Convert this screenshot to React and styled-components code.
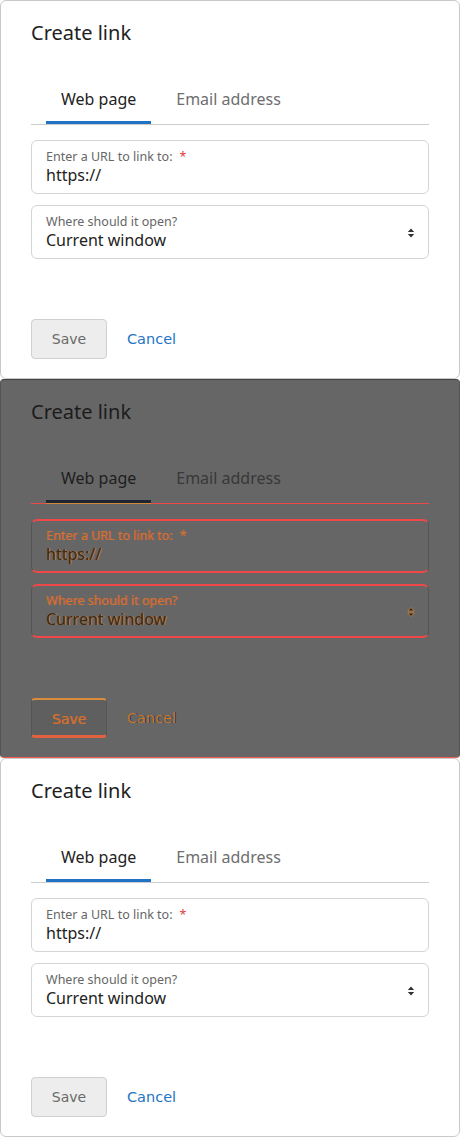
import React from "react";
import styled, { createGlobalStyle, css } from "styled-components";

const GlobalStyle = createGlobalStyle`
  html, body {
    margin: 0;
    padding: 0;
    background: #ffffff;
  }
  body {
    font-family: "Noto Sans", "Open Sans", sans-serif;
  }
`;

const Dialog = ({ contrast }) => {
  return (
    <Panel $contrast={contrast}>
      <Title $contrast={contrast}>Create link</Title>
      <TabList $contrast={contrast}>
        <Tab $active $contrast={contrast}>Web page</Tab>
        <Tab $contrast={contrast}>Email address</Tab>
      </TabList>
      <Field $contrast={contrast}>
        <Label $contrast={contrast}>
          Enter a URL to link to:<Required $contrast={contrast}>*</Required>
        </Label>
        <Value $contrast={contrast}>https://</Value>
      </Field>
      <SelectField $contrast={contrast}>
        <div>
          <Label $contrast={contrast}>Where should it open?</Label>
          <Value $contrast={contrast}>Current window</Value>
        </div>
        <Arrows viewBox="0 0 8 12" $contrast={contrast}>
          <path d="M4 1.5 L7.2 5 L0.8 5 Z" />
          <path d="M4 10.5 L7.2 7 L0.8 7 Z" />
        </Arrows>
      </SelectField>
      <Actions>
        <SaveButton $contrast={contrast}>Save</SaveButton>
        <CancelLink $contrast={contrast}>Cancel</CancelLink>
      </Actions>
    </Panel>
  );
};

const App = () => {
  return (
    <Page>
      <GlobalStyle />
      <Dialog />
      <Dialog contrast />
      <Dialog />
    </Page>
  );
};

export default App;

const Page = styled.div`
  display: flex;
  flex-direction: column;
  width: 460px;
`;

const Panel = styled.section`
  box-sizing: border-box;
  height: 379px;
  display: flex;
  flex-direction: column;
  padding: 17px 30px 0 30px;
  background: #ffffff;
  border: 1px solid #c9c9c9;
  border-radius: 6px;

  ${(p) =>
    p.$contrast &&
    css`
      background: #666666;
      border-color: #555555;
      border-top-color: #444444;
      border-bottom: 1px solid #f05a50;
      border-radius: 4px;
    `}
`;

const Title = styled.h2`
  margin: 0;
  font-size: 20px;
  line-height: 30px;
  font-weight: 400;
  color: ${(p) => (p.$contrast ? "#1c1c1c" : "#222222")};
`;

const TabList = styled.div`
  display: flex;
  gap: 10px;
  margin-top: 29px;
  padding-left: 15px;
  border-bottom: 1px solid ${(p) => (p.$contrast ? "#f04848" : "#cccccc")};
`;

const Tab = styled.div`
  padding: 10px 15px 10px 15px;
  font-size: 16px;
  line-height: 24px;
  color: ${(p) =>
    p.$active ? (p.$contrast ? "#1e1e1e" : "#222222") : p.$contrast ? "#383838" : "#6e6e6e"};
  border-bottom: 3px solid
    ${(p) => (p.$active ? (p.$contrast ? "#1d2733" : "#1f72c4") : "transparent")};

  ${(p) =>
    p.$active &&
    p.$contrast &&
    css`
      border-bottom: 3px solid #1d2733;
      box-shadow: 0 1px 0 #d48a3c;
    `}
`;

const fieldBox = css`
  box-sizing: border-box;
  height: 54px;
  padding: 8px 14px 7px 14px;
  border: 1px solid #d4d4d4;
  border-radius: 6px;
  background: transparent;

  ${(p) =>
    p.$contrast &&
    css`
      border-color: #555555;
      border-top: 2px solid #f04848;
      border-bottom: 2px solid #f04848;
      padding: 7px 14px 6px 14px;
    `}
`;

const Field = styled.div`
  ${fieldBox}
  margin-top: 15px;
`;

const SelectField = styled.div`
  ${fieldBox}
  margin-top: 11px;
  display: flex;
  align-items: center;
  justify-content: space-between;
  padding-right: 13px;
`;

const Label = styled.div`
  font-size: 12.5px;
  line-height: 16px;
  color: ${(p) => (p.$contrast ? "#c67a34" : "#666666")};
  ${(p) =>
    p.$contrast &&
    css`
      text-shadow: 0.5px 0 0 #e04a3a;
    `}
`;

const Required = styled.span`
  margin-left: 7px;
  color: ${(p) => (p.$contrast ? "#c67a34" : "#e03c3c")};
`;

const Value = styled.div`
  margin-top: -1px;
  font-size: 16px;
  line-height: 22px;
  color: ${(p) => (p.$contrast ? "#3a2c1e" : "#222222")};
  ${(p) =>
    p.$contrast &&
    css`
      text-shadow: 1px 0 0 #c8782f;
    `}
`;

const Arrows = styled.svg`
  width: 8px;
  height: 12px;
  fill: ${(p) => (p.$contrast ? "#2a2418" : "#333333")};
  ${(p) =>
    p.$contrast &&
    css`
      stroke: #d08a3c;
      stroke-width: 0.8;
    `}
`;

const Actions = styled.div`
  display: flex;
  align-items: center;
  gap: 20px;
  margin-top: 60px;
`;

const SaveButton = styled.button`
  box-sizing: border-box;
  width: 76px;
  height: 40px;
  padding: 0;
  border: 1px solid #d0d0d0;
  border-radius: 4px;
  background: #ededed;
  font-family: "DejaVu Sans", sans-serif;
  font-size: 14px;
  line-height: 38px;
  color: #6a6a6a;
  cursor: default;

  ${(p) =>
    p.$contrast &&
    css`
      background: #5f5f5f;
      border-color: #555555;
      border-top: 2px solid #d88c3c;
      border-bottom: 3px solid #e2613e;
      color: #c8792f;
      text-shadow: 0.5px 0 0 #e04a3a;
    `}
`;

const CancelLink = styled.a`
  font-family: "DejaVu Sans", sans-serif;
  font-size: 14.5px;
  color: ${(p) => (p.$contrast ? "#c8792f" : "#1f74c4")};
  text-decoration: none;
  ${(p) =>
    p.$contrast &&
    css`
      text-shadow: 1px 0 0 #27384c;
    `}
`;
